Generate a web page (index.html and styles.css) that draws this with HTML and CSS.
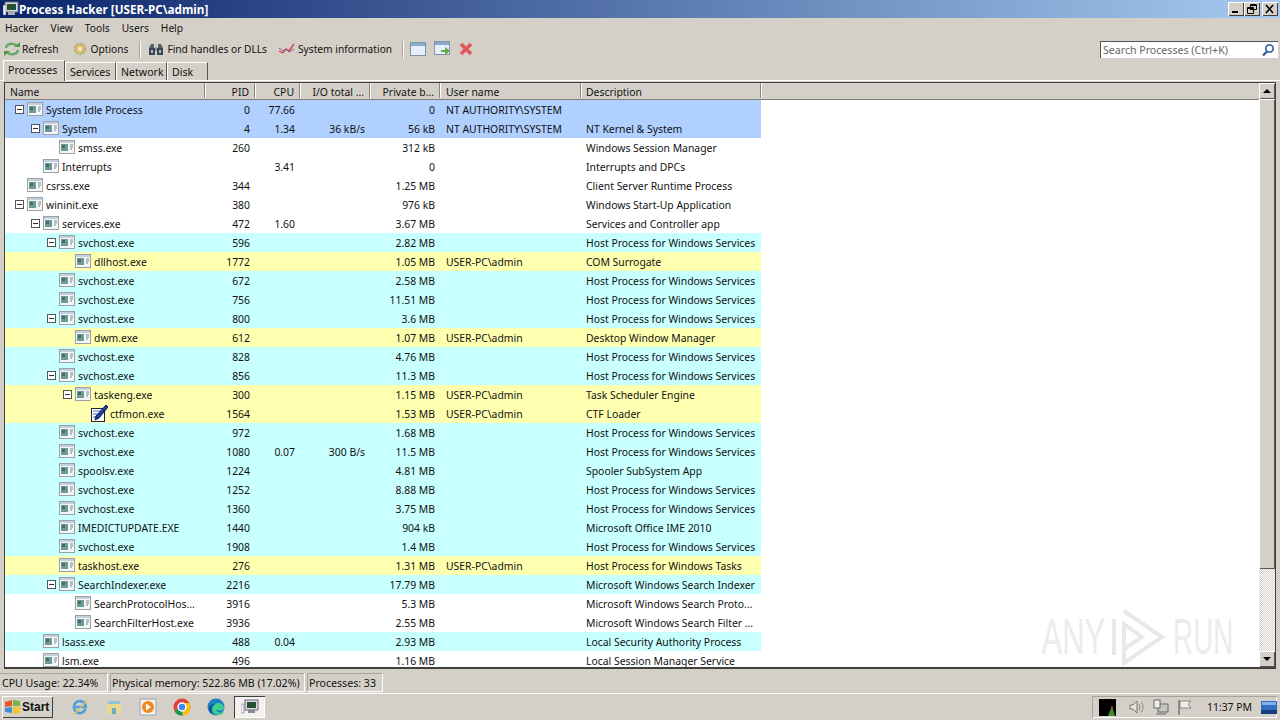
FILE: index.html
```html
<!DOCTYPE html>
<html lang="en">
<head>
    <meta charset="UTF-8">
    <title>Process Hacker [USER-PC\admin]</title>
    <link rel="stylesheet" href="styles.css">
</head>
<body>

<svg class="defs" width="0" height="0">
    <symbol id="proc" viewBox="0 0 16 14">
        <rect x="0.5" y="0.5" width="15" height="13" fill="#f4f6f8" stroke="#9aa2a8"/>
        <rect x="1" y="1" width="14" height="2" fill="#c3cfda"/>
        <rect x="2" y="4" width="7" height="7" fill="#6f9a94"/>
        <rect x="3" y="5" width="3" height="3" fill="#3f6f6a"/>
        <path d="M11 5h3M11 7h3M11 9h2" stroke="#7c858c"/>
    </symbol>
    <symbol id="win" viewBox="0 0 16 14">
        <rect x="0.5" y="0.5" width="15" height="13" fill="#e6f0fb" stroke="#7f93ad"/>
        <rect x="1" y="1" width="14" height="3" fill="#8ea8c8"/>
    </symbol>
</svg>

<!-- Title bar -->
<div class="titlebar">
    <svg class="title-icon" width="16" height="16" viewBox="0 0 16 16">
        <rect x="2" y="1" width="13" height="10" fill="#d8dde0" stroke="#667"/>
        <rect x="4" y="3" width="9" height="6" fill="#24512f"/>
        <rect x="5" y="11" width="7" height="3" fill="#aab"/>
        <rect x="0" y="4" width="3" height="10" fill="#eee" stroke="#667" stroke-width="0.5"/>
    </svg>
    <span class="title-text">Process Hacker [USER-PC\admin]</span>
    <div class="win-buttons">
        <span class="win-btn"><svg width="14" height="12"><rect x="3" y="8" width="6" height="2" fill="#000"/></svg></span>
        <span class="win-btn"><svg width="14" height="12"><path d="M5.5 1.5h6v5h-6zM5 2.5h7M2.5 4.5h6v6h-6zM2 5.5h7" fill="none" stroke="#000"/></svg></span>
        <span class="win-btn close-btn"><svg width="14" height="12"><path d="M3 2l7 8M10 2l-7 8" stroke="#000" stroke-width="1.6"/></svg></span>
    </div>
</div>

<!-- Menu -->
<ul class="menu">
    <li>Hacker</li>
    <li>View</li>
    <li>Tools</li>
    <li>Users</li>
    <li>Help</li>
</ul>

<!-- Toolbar -->
<div class="toolbar">
    <div class="tool tool-refresh">
        <svg width="18" height="16" viewBox="0 0 18 16"><path d="M3 7a6 5 0 0 1 11-2" fill="none" stroke="#6aa86a" stroke-width="2.5"/><path d="M15 9a6 5 0 0 1-11 2" fill="none" stroke="#6aa86a" stroke-width="2.5"/><path d="M11 6h6V1zM7 10H1v5z" fill="#4c9a4c"/></svg>
        Refresh
    </div>
    <div class="tool tool-options">
        <svg width="16" height="16" viewBox="0 0 16 16"><circle cx="8" cy="8" r="5" fill="#e3c268" stroke="#b8a878" stroke-width="2.5" stroke-dasharray="2 1.2"/><circle cx="8" cy="8" r="2" fill="#f3ead0"/></svg>
        Options
    </div>
    <span class="sep"></span>
    <div class="tool tool-find">
        <svg width="16" height="14" viewBox="0 0 16 14"><path d="M1 6l2-4h3v4zM15 6l-2-4h-3v4z" fill="#56606c"/><rect x="1" y="6" width="6" height="7" fill="#3c4654"/><rect x="9" y="6" width="6" height="7" fill="#3c4654"/><rect x="7" y="5" width="2" height="4" fill="#8c949c"/><path d="M3 8h2v3H3zM11 8h2v3h-2z" fill="#b0bac4"/></svg>
        Find handles or DLLs
    </div>
    <div class="tool tool-sys">
        <svg width="16" height="12" viewBox="0 0 16 12"><path d="M0 8l4 2 3-4 3 2 5-7" fill="none" stroke="#c44" stroke-width="1.3"/><path d="M0 5l4 3 3-2 3 3 5-3" fill="none" stroke="#85a"/></svg>
        System information
    </div>
    <span class="sep sep-second"></span>
    <svg class="tool-icon" width="16" height="14"><use href="#win"/></svg>
    <svg class="tool-icon" width="17" height="16" viewBox="0 0 17 16"><use href="#win" width="16" height="14"/><path d="M7 9h4V6l5 4-5 4v-3H7z" fill="#63a84a"/></svg>
    <svg class="tool-icon" width="14" height="14" viewBox="0 0 14 14"><path d="M2 2l10 10M12 2L2 12" stroke="#e2555b" stroke-width="3.6"/></svg>
    <div class="search">
        <span>Search Processes (Ctrl+K)</span>
        <svg width="14" height="14" viewBox="0 0 14 14"><circle cx="8.5" cy="5.5" r="3.7" fill="none" stroke="#3f6cab" stroke-width="1.8"/><path d="M6 8.5L2 12.5" stroke="#2d5390" stroke-width="2.2"/></svg>
    </div>
</div>

<!-- Tabs -->
<div class="tabs">
    <span class="tab tab-active">Processes</span>
    <span class="tab tab-wide">Services</span>
    <span class="tab tab-wide">Network</span>
    <span class="tab tab-disk">Disk</span>
</div>

<!-- Process tree -->
<div class="panel">
    <div class="tree">
        <div class="row head">
            <span>Name</span><span class="num">PID</span><span class="num">CPU</span><span class="num">I/O total ...</span><span class="num">Private b...</span><span>User name</span><span>Description</span>
        </div>
        <div class="row blue"><span class="name d0"><i class="exp"></i><svg class="pi"><use href="#proc"/></svg>System Idle Process</span><span class="num">0</span><span class="num">77.66</span><span class="num"></span><span class="num">0</span><span>NT AUTHORITY\SYSTEM</span><span></span></div>
        <div class="row blue"><span class="name d1"><i class="exp"></i><svg class="pi"><use href="#proc"/></svg>System</span><span class="num">4</span><span class="num">1.34</span><span class="num">36 kB/s</span><span class="num">56 kB</span><span>NT AUTHORITY\SYSTEM</span><span>NT Kernel &amp; System</span></div>
        <div class="row"><span class="name d2"><svg class="pi"><use href="#proc"/></svg>smss.exe</span><span class="num">260</span><span class="num"></span><span class="num"></span><span class="num">312 kB</span><span></span><span>Windows Session Manager</span></div>
        <div class="row"><span class="name d1"><svg class="pi"><use href="#proc"/></svg>Interrupts</span><span class="num"></span><span class="num">3.41</span><span class="num"></span><span class="num">0</span><span></span><span>Interrupts and DPCs</span></div>
        <div class="row"><span class="name d0"><svg class="pi"><use href="#proc"/></svg>csrss.exe</span><span class="num">344</span><span class="num"></span><span class="num"></span><span class="num">1.25 MB</span><span></span><span>Client Server Runtime Process</span></div>
        <div class="row"><span class="name d0"><i class="exp"></i><svg class="pi"><use href="#proc"/></svg>wininit.exe</span><span class="num">380</span><span class="num"></span><span class="num"></span><span class="num">976 kB</span><span></span><span>Windows Start-Up Application</span></div>
        <div class="row"><span class="name d1"><i class="exp"></i><svg class="pi"><use href="#proc"/></svg>services.exe</span><span class="num">472</span><span class="num">1.60</span><span class="num"></span><span class="num">3.67 MB</span><span></span><span>Services and Controller app</span></div>
        <div class="row cyan"><span class="name d2"><i class="exp"></i><svg class="pi"><use href="#proc"/></svg>svchost.exe</span><span class="num">596</span><span class="num"></span><span class="num"></span><span class="num">2.82 MB</span><span></span><span>Host Process for Windows Services</span></div>
        <div class="row yellow"><span class="name d3"><svg class="pi"><use href="#proc"/></svg>dllhost.exe</span><span class="num">1772</span><span class="num"></span><span class="num"></span><span class="num">1.05 MB</span><span>USER-PC\admin</span><span>COM Surrogate</span></div>
        <div class="row cyan"><span class="name d2"><svg class="pi"><use href="#proc"/></svg>svchost.exe</span><span class="num">672</span><span class="num"></span><span class="num"></span><span class="num">2.58 MB</span><span></span><span>Host Process for Windows Services</span></div>
        <div class="row cyan"><span class="name d2"><svg class="pi"><use href="#proc"/></svg>svchost.exe</span><span class="num">756</span><span class="num"></span><span class="num"></span><span class="num">11.51 MB</span><span></span><span>Host Process for Windows Services</span></div>
        <div class="row cyan"><span class="name d2"><i class="exp"></i><svg class="pi"><use href="#proc"/></svg>svchost.exe</span><span class="num">800</span><span class="num"></span><span class="num"></span><span class="num">3.6 MB</span><span></span><span>Host Process for Windows Services</span></div>
        <div class="row yellow"><span class="name d3"><svg class="pi"><use href="#proc"/></svg>dwm.exe</span><span class="num">612</span><span class="num"></span><span class="num"></span><span class="num">1.07 MB</span><span>USER-PC\admin</span><span>Desktop Window Manager</span></div>
        <div class="row cyan"><span class="name d2"><svg class="pi"><use href="#proc"/></svg>svchost.exe</span><span class="num">828</span><span class="num"></span><span class="num"></span><span class="num">4.76 MB</span><span></span><span>Host Process for Windows Services</span></div>
        <div class="row cyan"><span class="name d2"><i class="exp"></i><svg class="pi"><use href="#proc"/></svg>svchost.exe</span><span class="num">856</span><span class="num"></span><span class="num"></span><span class="num">11.3 MB</span><span></span><span>Host Process for Windows Services</span></div>
        <div class="row yellow"><span class="name d3"><i class="exp"></i><svg class="pi"><use href="#proc"/></svg>taskeng.exe</span><span class="num">300</span><span class="num"></span><span class="num"></span><span class="num">1.15 MB</span><span>USER-PC\admin</span><span>Task Scheduler Engine</span></div>
        <div class="row yellow"><span class="name d4"><svg class="pi pi-note" viewBox="0 0 17 17"><rect x="0.5" y="3.5" width="13" height="13" fill="#fff" stroke="#223"/><path d="M2 6h8M2 9h6M2 12h4" stroke="#46c"/><path d="M15 0l2 2-9 11-4 2 1-4z" fill="#1d3f9e" stroke="#0b1a4a"/></svg>ctfmon.exe</span><span class="num">1564</span><span class="num"></span><span class="num"></span><span class="num">1.53 MB</span><span>USER-PC\admin</span><span>CTF Loader</span></div>
        <div class="row cyan"><span class="name d2"><svg class="pi"><use href="#proc"/></svg>svchost.exe</span><span class="num">972</span><span class="num"></span><span class="num"></span><span class="num">1.68 MB</span><span></span><span>Host Process for Windows Services</span></div>
        <div class="row cyan"><span class="name d2"><svg class="pi"><use href="#proc"/></svg>svchost.exe</span><span class="num">1080</span><span class="num">0.07</span><span class="num">300 B/s</span><span class="num">11.5 MB</span><span></span><span>Host Process for Windows Services</span></div>
        <div class="row cyan"><span class="name d2"><svg class="pi"><use href="#proc"/></svg>spoolsv.exe</span><span class="num">1224</span><span class="num"></span><span class="num"></span><span class="num">4.81 MB</span><span></span><span>Spooler SubSystem App</span></div>
        <div class="row cyan"><span class="name d2"><svg class="pi"><use href="#proc"/></svg>svchost.exe</span><span class="num">1252</span><span class="num"></span><span class="num"></span><span class="num">8.88 MB</span><span></span><span>Host Process for Windows Services</span></div>
        <div class="row cyan"><span class="name d2"><svg class="pi"><use href="#proc"/></svg>svchost.exe</span><span class="num">1360</span><span class="num"></span><span class="num"></span><span class="num">3.75 MB</span><span></span><span>Host Process for Windows Services</span></div>
        <div class="row cyan"><span class="name d2"><svg class="pi"><use href="#proc"/></svg>IMEDICTUPDATE.EXE</span><span class="num">1440</span><span class="num"></span><span class="num"></span><span class="num">904 kB</span><span></span><span>Microsoft Office IME 2010</span></div>
        <div class="row cyan"><span class="name d2"><svg class="pi"><use href="#proc"/></svg>svchost.exe</span><span class="num">1908</span><span class="num"></span><span class="num"></span><span class="num">1.4 MB</span><span></span><span>Host Process for Windows Services</span></div>
        <div class="row yellow"><span class="name d2"><svg class="pi"><use href="#proc"/></svg>taskhost.exe</span><span class="num">276</span><span class="num"></span><span class="num"></span><span class="num">1.31 MB</span><span>USER-PC\admin</span><span>Host Process for Windows Tasks</span></div>
        <div class="row cyan"><span class="name d2"><i class="exp"></i><svg class="pi"><use href="#proc"/></svg>SearchIndexer.exe</span><span class="num">2216</span><span class="num"></span><span class="num"></span><span class="num">17.79 MB</span><span></span><span>Microsoft Windows Search Indexer</span></div>
        <div class="row"><span class="name d3"><svg class="pi"><use href="#proc"/></svg>SearchProtocolHos...</span><span class="num">3916</span><span class="num"></span><span class="num"></span><span class="num">5.3 MB</span><span></span><span>Microsoft Windows Search Proto...</span></div>
        <div class="row"><span class="name d3"><svg class="pi"><use href="#proc"/></svg>SearchFilterHost.exe</span><span class="num">3936</span><span class="num"></span><span class="num"></span><span class="num">2.55 MB</span><span></span><span>Microsoft Windows Search Filter ...</span></div>
        <div class="row cyan"><span class="name d1"><svg class="pi"><use href="#proc"/></svg>lsass.exe</span><span class="num">488</span><span class="num">0.04</span><span class="num"></span><span class="num">2.93 MB</span><span></span><span>Local Security Authority Process</span></div>
        <div class="row"><span class="name d1"><svg class="pi"><use href="#proc"/></svg>lsm.exe</span><span class="num">496</span><span class="num"></span><span class="num"></span><span class="num">1.16 MB</span><span></span><span>Local Session Manager Service</span></div>
    </div>
    <div class="scrollbar">
        <span class="sb-btn"><i class="arrow-up"></i></span>
        <span class="sb-thumb"></span>
        <span class="sb-track"></span>
        <span class="sb-btn"><i class="arrow-down"></i></span>
    </div>
    <!-- Watermark -->
    <div class="watermark">
        <span class="wm-any">ANY</span>
        <svg width="56" height="60" viewBox="0 0 56 60"><path d="M3 12v36M13 4l38 26-38 26V17l18 13-18 12" fill="none" stroke="#e8e8e8" stroke-width="4"/></svg>
        <span class="wm-run">RUN</span>
    </div>
</div>

<!-- Status bar -->
<div class="statusbar">
    <span class="stat stat-cpu">CPU Usage: 22.34%</span>
    <span class="stat stat-mem">Physical memory: 522.86 MB (17.02%)</span>
    <span class="stat stat-count">Processes: 33</span>
</div>

<!-- Taskbar -->
<div class="taskbar">
    <div class="start">
        <svg width="17" height="16" viewBox="0 0 17 16"><path d="M1 3l7-2v6l-7 1z" fill="#e2592b"/><path d="M9 1l7 1v5H9z" fill="#7cb342"/><path d="M1 9l7-1v6l-7-1z" fill="#3f8fd8"/><path d="M9 8h7v6l-7 1z" fill="#f4c430"/></svg>
        Start
    </div>
    <div class="quick">
        <svg width="18" height="18" viewBox="0 0 18 18"><path d="M14.5 11a6 6 0 1 1-.5-5c.6 1 .8 2 .8 3H4.500" fill="none" stroke="#4aa0dc" stroke-width="2.6"/><path d="M2 16C6 15 13 6 16 2" fill="none" stroke="#e0c05c" stroke-width="1.3"/></svg>
        <svg width="18" height="18" viewBox="0 0 18 18"><path d="M2 6h14v10H2z" fill="#e9d88f"/><path d="M2 6l2-3h10l2 3z" fill="#8fc4d8"/><rect x="7" y="10" width="4" height="6" fill="#6fa8c0"/></svg>
        <svg width="18" height="18" viewBox="0 0 18 18"><rect x="1" y="1" width="16" height="16" fill="#f6f1e4" stroke="#8aa6c8"/><circle cx="9" cy="9" r="6" fill="#ef8a1f"/><path d="M7 5.500l5 3.500-5 3.500z" fill="#fff"/></svg>
        <svg width="18" height="18" viewBox="0 0 18 18"><circle cx="9" cy="9" r="8.500" fill="#db4437"/><path d="M9 9L1.500 13a8.500 8.500 0 0 0 8 4.500z" fill="#0f9d58"/><path d="M9 5h7.500a8.500 8.500 0 0 1-7 12.500z" fill="#f4c20d"/><circle cx="9" cy="9" r="4" fill="#4285f4" stroke="#fff" stroke-width="1.500"/></svg>
        <svg width="18" height="18" viewBox="0 0 18 18"><circle cx="9" cy="9" r="8.500" fill="#1b7fc4"/><path d="M17 10c0-3-3-5-6-5-4 0-6 3-6 6 0 3 3 6 7 6 2 0 4-1 5-3-2 1-7 1-8-2 3 1 8 1 8-2z" fill="#3ecf8e"/><path d="M5 11c0-3 2-5 5-5-3-1-7 1-8 4 0 2 1 5 3 6-1-2-1-3 0-5z" fill="#0d4f94"/></svg>
    </div>
    <div class="task-active">
        <svg width="18" height="16" viewBox="0 0 18 16"><rect x="4" y="1" width="13" height="10" fill="#d8dde0" stroke="#667"/><rect x="6" y="3" width="9" height="6" fill="#24512f"/><rect x="7" y="11" width="7" height="3" fill="#889"/><rect x="0" y="5" width="3" height="9" fill="#eee" stroke="#667" stroke-width="0.5"/></svg>
    </div>
    <div class="tray">
        <svg class="tray-graph" width="17" height="17"><rect width="17" height="17" fill="#000"/><path d="M9 17l4-10 3 10z" fill="#1fa52a"/><path d="M13 7v10" stroke="#d33"/></svg>
        <svg class="tray-sound" width="16" height="16" viewBox="0 0 16 16"><path d="M1 6h3l4-4v12l-4-4H1z" fill="#e4e2dc" stroke="#777"/><path d="M10 5c1 2 1 4 0 6M12.5 3c2 3 2 7 0 10" fill="none" stroke="#888"/></svg>
        <svg class="tray-net" width="16" height="16" viewBox="0 0 16 16"><rect x="5" y="5" width="10" height="8" fill="#c8c6c0" stroke="#666"/><rect x="1" y="1" width="6" height="8" fill="#eee" stroke="#666"/><path d="M3 15h10" stroke="#666"/></svg>
        <svg class="tray-flag" width="16" height="16" viewBox="0 0 16 16"><path d="M2 1v15" stroke="#777" stroke-width="1.5"/><path d="M3 2h11l-3 3 3 4H3z" fill="#eee" stroke="#888"/></svg>
        <span class="clock">11:37 PM</span>
        <svg class="tray-desktop" width="16" height="13" viewBox="0 0 16 13"><rect width="16" height="13" fill="#2e6fc2"/><rect y="9" width="16" height="4" fill="#173f7c"/><rect x="1" y="1" width="14" height="3" fill="#7fb0e6"/></svg>
    </div>
</div>

</body>
</html>
```
FILE: styles.css
```css
/* General styles */
html, body {
    margin: 0;
    padding: 0;
    height: 100%;
    overflow: hidden;
}

body {
    width: 1280px;
    height: 720px;
    display: flex;
    flex-direction: column;
    background-color: #d4d0c8;
    font-family: "Noto Sans", Tahoma, sans-serif;
    font-size: 10.4px;
    color: #111;
}

.defs {
    position: absolute;
}

/* Title bar */
.titlebar {
    height: 18px;
    flex-shrink: 0;
    display: flex;
    align-items: center;
    padding-left: 3px;
    background: linear-gradient(to right, #0a246a, #a6caf0);
}

.title-text {
    color: white;
    font-size: 11.7px;
    font-weight: bold;
    white-space: nowrap;
}

.title-icon {
    flex-shrink: 0;
}

.win-buttons {
    margin-left: auto;
    display: flex;
    padding-right: 2px;
}

.win-btn {
    width: 16px;
    height: 14px;
    display: flex;
    align-items: center;
    justify-content: center;
    background-color: #d4d0c8;
    box-shadow: inset 1px 1px 0 #fff, inset -1px -1px 0 #404040;
}

.close-btn {
    margin-left: 2px;
}

/* Menu */
.menu {
    list-style-type: none;
    margin: 0;
    padding: 0 0 0 5px;
    height: 20px;
    box-sizing: border-box;
    flex-shrink: 0;
    display: flex;
    align-items: center;
    gap: 12px;
    font-size: 10.2px;
}

/* Toolbar */
.toolbar {
    height: 22px;
    box-sizing: border-box;
    flex-shrink: 0;
    display: flex;
    align-items: center;
    padding: 0 0 0 3px;
    font-size: 10.2px;
}

.tool {
    display: flex;
    align-items: center;
    gap: 3px;
    white-space: nowrap;
}

.tool-refresh {
    gap: 1px;
}

.tool-options {
    margin-left: 13px;
}

.tool-sys {
    margin-left: 12px;
}

.sep {
    width: 1px;
    height: 17px;
    margin: 0 8px 0 11px;
    background-color: #a8a49c;
    box-shadow: 1px 0 0 #fff;
}

.sep-second {
    margin: 0 7px 0 10px;
}

.tool-icon {
    margin-right: 8px;
}

.search {
    margin-left: auto;
    margin-right: 2px;
    width: 172px;
    height: 16px;
    display: flex;
    align-items: center;
    justify-content: space-between;
    padding: 0 3px 0 2px;
    background-color: white;
    border-top: 1px solid #555;
    border-left: 1px solid #555;
    color: #666;
    font-size: 10.6px;
    white-space: nowrap;
}

/* Tabs */
.tabs {
    height: 21px;
    box-sizing: border-box;
    flex-shrink: 0;
    display: flex;
    align-items: flex-end;
    padding-left: 3px;
    border-bottom: 1px solid #fff;
}

.tab {
    box-sizing: border-box;
    height: 18px;
    line-height: 19px;
    padding-left: 4px;
    border-top: 1px solid #fff;
    border-left: 1px solid #fff;
    border-right: 1px solid #555;
    background-color: #d4d0c8;
    font-size: 10.6px;
    white-space: nowrap;
}

.tab-active {
    width: 62px;
    height: 21px;
    line-height: 19px;
    margin-bottom: -1px;
    padding-left: 4px;
}

.tab-wide {
    width: 51px;
}

.tab-disk {
    width: 41px;
}

/* Process tree */
.panel {
    position: relative;
    height: 587px;
    flex-shrink: 0;
    margin: 1px 4px 0 4px;
    display: flex;
    background-color: white;
    border: 1px solid #404040;
    border-bottom-width: 2px;
    box-sizing: border-box;
    overflow: hidden;
}

.tree {
    flex: 1;
    overflow: hidden;
}

.row {
    display: grid;
    grid-template-columns: 200px 50px 45px 70px 70px 141px 180px;
    height: 19px;
    line-height: 18px;
    white-space: nowrap;
    width: 756px;
}

.row span {
    padding: 1px 5px 0;
    overflow: hidden;
}

.row span:nth-child(6) {
    padding-left: 6px;
}

.row .num {
    text-align: right;
}

.row.head {
    width: auto;
    height: 16px;
    line-height: 17px;
    grid-template-columns: 200px 50px 45px 70px 70px 141px 180px 1fr;
    background-color: #d4d0c8;
    border-bottom: 1px solid #808080;
}

.head span {
    height: 14px;
    border-right: 1px solid #8a8780;
    box-shadow: 1px 0 0 #fff;
}

.blue {
    background-color: #b0d0ff;
}

.cyan {
    background-color: #c8ffff;
}

.yellow {
    background-color: #ffffb0;
}

/* Name column with tree indent */
.row .name {
    position: relative;
    display: flex;
    align-items: center;
    padding: 1px 0 0;
}

.row .d0 { padding-left: 22px; }
.row .d1 { padding-left: 38px; }
.row .d2 { padding-left: 54px; }
.row .d3 { padding-left: 70px; }
.row .d4 { padding-left: 86px; }

.pi {
    width: 16px;
    height: 14px;
    margin: -3px 3px 0 0;
    flex-shrink: 0;
}

.pi-note {
    width: 17px;
    height: 17px;
    margin: -2px 2px 0 0;
}

.exp {
    position: absolute;
    width: 7px;
    height: 7px;
    margin: -2px 0 0 -12px;
    border: 1px solid #555;
    background: linear-gradient(#333, #333) center / 5px 1px no-repeat, white;
}

/* Scrollbar */
.scrollbar {
    width: 16px;
    flex-shrink: 0;
    display: flex;
    flex-direction: column;
}

.sb-btn, .sb-thumb {
    background-color: #d4d0c8;
    box-shadow: inset 1px 1px 0 #fff, inset -1px -1px 0 #555;
}

.sb-btn {
    height: 16px;
    flex-shrink: 0;
    display: flex;
    align-items: center;
    justify-content: center;
}

.sb-thumb {
    height: 470px;
}

.sb-track {
    flex: 1;
    background: repeating-conic-gradient(#d4d0c8 0 25%, #fff 0 50%) 0 0 / 2px 2px;
}

.arrow-up, .arrow-down {
    width: 0;
    height: 0;
    border-left: 4px solid transparent;
    border-right: 4px solid transparent;
}

.arrow-up {
    border-bottom: 4px solid #000;
}

.arrow-down {
    border-top: 4px solid #000;
}

/* Watermark */
.watermark {
    position: absolute;
    right: 42px;
    bottom: 0;
    display: flex;
    align-items: center;
    gap: 6px;
    font-family: "Liberation Sans", sans-serif;
    font-size: 50px;
    color: #ececec;
}

.watermark span {
    display: inline-block;
}

.wm-any {
    transform: scaleX(0.62);
    margin: 0 -20px;
}

.wm-run {
    transform: scaleX(0.555);
    margin: 0 -24px;
}

/* Status bar */
.statusbar {
    height: 23px;
    flex-shrink: 0;
    display: flex;
    align-items: center;
    gap: 2px;
    margin-top: 2px;
    border-bottom: 1px solid #fff;
    box-sizing: border-box;
    font-size: 10.6px;
    white-space: nowrap;
}

.stat {
    height: 19px;
    line-height: 18px;
    padding-left: 1px;
    border-top: 1px solid #a8a49c;
    border-left: 1px solid #a8a49c;
    border-right: 1px solid #fff;
    border-bottom: 1px solid #fff;
    box-sizing: border-box;
}

.stat-cpu { width: 108px; padding-left: 2px; border-left: 0; }
.stat-mem { width: 195px; }
.stat-count { width: 76px; }

/* Taskbar */
.taskbar {
    flex: 1;
    display: flex;
    align-items: center;
    padding-left: 2px;
}

.start {
    width: 51px;
    height: 22px;
    box-sizing: border-box;
    display: flex;
    align-items: center;
    gap: 1px;
    padding-left: 2px;
    font-family: "Liberation Sans", sans-serif;
    font-size: 12px;
    font-weight: bold;
    box-shadow: inset 1px 1px 0 #fff, inset -1px -1px 0 #404040;
}

.quick {
    margin-left: 18px;
    display: flex;
    align-items: center;
    gap: 16px;
}

.task-active {
    margin-left: 9px;
    width: 31px;
    height: 22px;
    display: flex;
    align-items: center;
    justify-content: center;
    background-color: #f4f2ee;
    box-shadow: inset 1px 1px 0 #404040, inset -1px -1px 0 #fff;
}

.tray {
    margin-left: auto;
    margin-right: 3px;
    width: 185px;
    height: 22px;
    box-sizing: border-box;
    display: flex;
    align-items: center;
    padding-left: 7px;
    box-shadow: inset 1px 1px 0 #a8a49c, inset -1px -1px 0 #fff;
}

.tray-sound { margin-left: 13px; }
.tray-net { margin-left: 8px; }
.tray-flag { margin-left: 8px; }
.tray-desktop { margin-left: 9px; }

.clock {
    margin-left: 14px;
    white-space: nowrap;
}
```
